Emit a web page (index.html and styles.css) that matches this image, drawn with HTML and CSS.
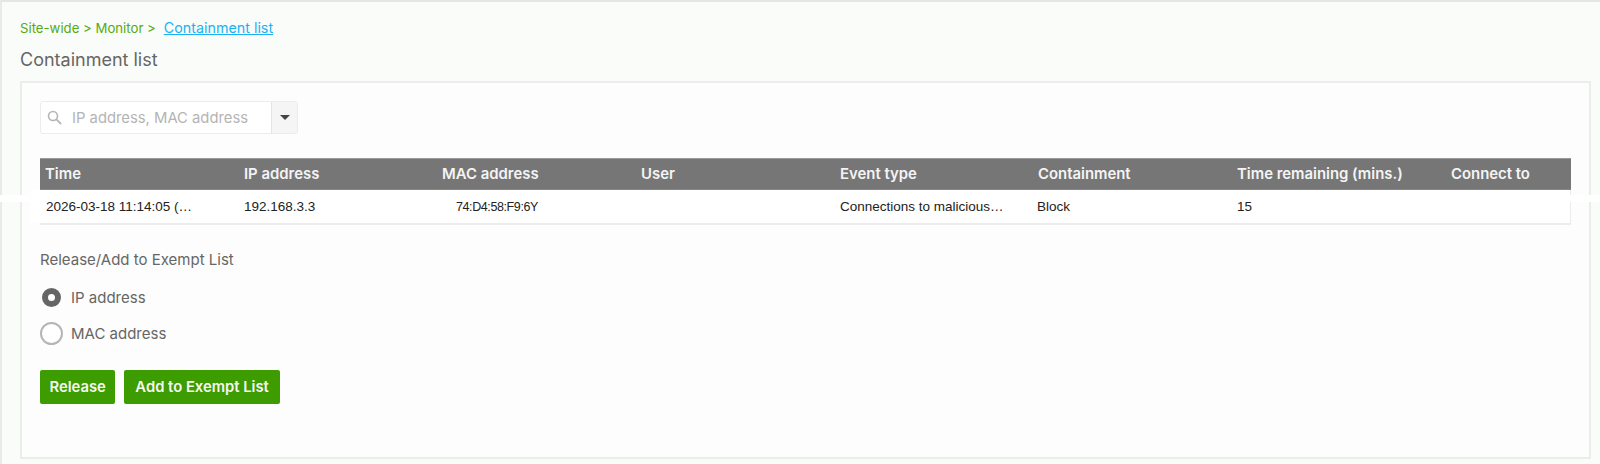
FILE: index.html
```html
<!DOCTYPE html>
<html lang="en">
<head>
<meta charset="utf-8">
<title>Containment list</title>
<link rel="stylesheet" href="styles.css">
</head>
<body>
<div class="page">
  <nav class="crumbs">
    <span class="crumb">Site-wide &gt; Monitor &gt;</span>
    <a class="crumb-link" href="#">Containment list</a>
  </nav>
  <h1 class="title">Containment list</h1>
  <section class="card">
    <div class="search">
      <div class="search-field">
        <svg class="search-icon" width="15" height="15" viewBox="0 0 15 15"><circle cx="6" cy="6" r="4.5" fill="none" stroke="#b5b5b5" stroke-width="1.6"/><path d="M9.4 9.4 14 14" stroke="#b5b5b5" stroke-width="1.8" fill="none"/></svg>
        <span class="placeholder">IP address, MAC address</span>
      </div>
      <div class="search-caret"><span class="caret"></span></div>
    </div>
    <div class="table">
      <div class="row head">
        <span>Time</span><span>IP address</span><span>MAC address</span><span>User</span><span class="cell-event">Event type</span><span>Containment</span><span>Time remaining (mins.)</span><span>Connect to</span>
      </div>
      <div class="row body">
        <span class="cell-first">2026-03-18 11:14:05 (…</span><span>192.168.3.3</span><span class="cell-mac">74:D4:58:F9:6Y</span><span></span><span class="cell-event">Connections to malicious…</span><span class="cell-block">Block</span><span>15</span><span></span>
      </div>
    </div>
    <p class="label">Release/Add to Exempt List</p>
    <div class="radios">
      <div class="radio"><span class="dot on"></span><span>IP address</span></div>
      <div class="radio"><span class="dot"></span><span>MAC address</span></div>
    </div>
    <div class="actions">
      <button class="btn">Release</button>
      <button class="btn btn-wide">Add to Exempt List</button>
    </div>
  </section>
  <div class="streak streak-left"></div>
  <div class="streak streak-patch"></div>
  <div class="streak streak-right"></div>
</div>
</body>
</html>
```
FILE: styles.css
```css
* { box-sizing: border-box; }
html, body { margin: 0; height: 100%; }
body { background: #fafcf9; font-family: Inter, "Liberation Sans", sans-serif; color: #666; overflow: hidden; }
.page { position: relative; height: 464px; padding: 18px 9px 0 18px; border-top: 2px solid #e4e6e4; border-left: 2px solid #e8ebe7; }
.crumbs { display: flex; gap: 8px; line-height: 16px; height: 16px; }
.crumb { color: #55aa12; font-size: 13.2px; }
.crumb-link { color: #1ab2f5; text-decoration: underline; font-size: 14.3px; }
.title { margin: 13px 0 0; font-size: 18px; line-height: 22px; font-weight: 400; color: #666; }
.card { margin-top: 10px; height: 378px; background: #fdfdfd; border: 2px solid #ebedeb; padding: 18px 18px 0; }
.search { display: flex; width: 258px; height: 33px; border: 1px solid #ececec; border-radius: 3px; background: #fff; }
.search-field { flex: 1; display: flex; align-items: center; padding-left: 6px; gap: 10px; }
.placeholder { font-size: 14.8px; color: #b4b4b4; }
.search-caret { width: 26px; display: flex; align-items: center; justify-content: center; background: #f5f5f5; border-left: 1px solid #e4e4e4; }
.caret { border: 5px solid transparent; border-top: 5px solid #444; border-bottom: 0; }
.table { margin-top: 24px; width: 1531px; }
.row { display: grid; grid-template-columns: 199px 198px 199px 198px 199px 199px 214px 125px; }
.head { height: 32px; align-items: center; background: #767676; border-top: 1px solid #999; border-bottom: 1px solid #888; color: #f4f4f4; font-size: 14.9px; font-weight: 600; }
.head span { padding-left: 5px; }
.body { height: 35px; align-items: center; background: #fff; border-bottom: 2px solid #ececec; border-right: 1px solid #ececec; font-family: "Liberation Sans", Arial, sans-serif; font-size: 13.5px; color: #222; }
.body span { padding-left: 5px; }
.body .cell-first { padding-left: 6px; }
.body .cell-mac { padding-left: 19px; font-size: 12.5px; letter-spacing: -0.4px; }
.body .cell-block { padding-left: 4px; }
.head .cell-event, .body .cell-event { padding-left: 6px; }
.label { margin: 26px 0 0; font-size: 15px; line-height: 18px; color: #666; }
.radios { margin-top: 17px; display: flex; flex-direction: column; gap: 13px; }
.radio { display: flex; align-items: center; gap: 8px; height: 23px; font-size: 15px; color: #666; }
.dot { width: 23px; height: 23px; border-radius: 50%; border: 2px solid #b5b5b5; background: #fff; }
.dot.on { border: 6px solid #666; width: 19px; height: 19px; margin: 0 2px; }
.actions { margin-top: 25px; display: flex; gap: 9px; }
.btn { height: 34px; padding: 0 9.5px; border: 0; border-radius: 2px; background: #3c9c00; color: #f5f8f0; font-family: Inter, "Liberation Sans", sans-serif; font-size: 14.8px; font-weight: 600; }
.btn-wide { padding: 0 11px; }
.streak { position: absolute; background: #fff; }
.streak-left { left: -2px; top: 193px; width: 42px; height: 7px; }
.streak-patch { left: 28px; top: 188px; width: 10px; height: 33px; }
.streak-right { left: 1418px; right: 0; top: 193px; height: 7px; }
```
